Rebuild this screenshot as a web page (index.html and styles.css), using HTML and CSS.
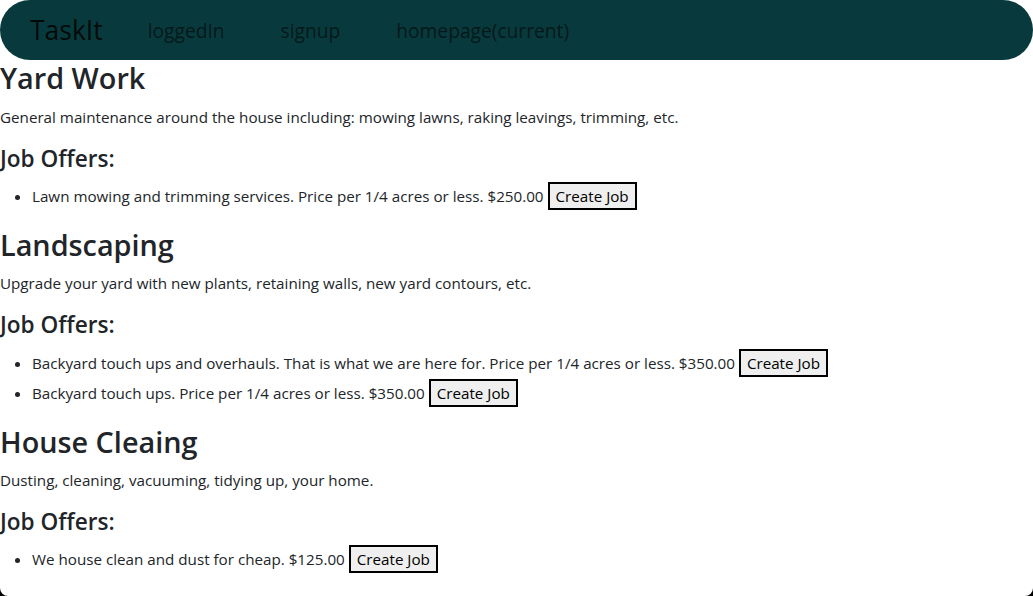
FILE: index.html
```html
<!DOCTYPE html>
<html lang="en">
<head>
<meta charset="utf-8">
<title>TaskIt</title>
<link rel="stylesheet" href="styles.css">
</head>
<body>
<nav class="navbar">
  <a class="brand">TaskIt</a>
  <a class="nav-link">loggedIn</a>
  <a class="nav-link">signup</a>
  <a class="nav-link">homepage(current)</a>
</nav>
<main>
  <section>
    <h2>Yard Work</h2>
    <p>General maintenance around the house including: mowing lawns, raking leavings, trimming, etc.</p>
    <h4>Job Offers:</h4>
    <ul>
      <li>Lawn mowing and trimming services. Price per 1/4 acres or less. $250.00 <button class="btn">Create Job</button></li>
    </ul>
  </section>
  <section>
    <h2>Landscaping</h2>
    <p>Upgrade your yard with new plants, retaining walls, new yard contours, etc.</p>
    <h4>Job Offers:</h4>
    <ul>
      <li>Backyard touch ups and overhauls. That is what we are here for. Price per 1/4 acres or less. $350.00 <button class="btn">Create Job</button></li>
      <li>Backyard touch ups. Price per 1/4 acres or less. $350.00 <button class="btn">Create Job</button></li>
    </ul>
  </section>
  <section>
    <h2>House Cleaing</h2>
    <p>Dusting, cleaning, vacuuming, tidying up, your home.</p>
    <h4>Job Offers:</h4>
    <ul>
      <li>We house clean and dust for cheap. $125.00 <button class="btn">Create Job</button></li>
    </ul>
  </section>
</main>
</body>
</html>
```
FILE: styles.css
```css
html {
  background: #000;
}
body {
  margin: 0;
  min-height: 100vh;
  background: #fff;
  border-radius: 0 0 8px 8px;
  font-family: "Segoe UI", "Open Sans", sans-serif;
  font-size: 15.2px;
  line-height: 24px;
  color: #212529;
}
.navbar {
  display: flex;
  align-items: center;
  height: 60px;
  box-sizing: border-box;
  padding: 0 30px;
  background: #083a3d;
  border-radius: 30px;
}
.brand {
  font-size: 26.5px;
  color: rgba(0, 0, 0, 0.85);
  margin-right: 45px;
  line-height: 1;
}
.nav-link {
  font-size: 19.2px;
  color: rgba(0, 0, 0, 0.6);
  margin-right: 56px;
  line-height: 1;
  padding-top: 2px;
}
h2, h4 {
  margin: 0 0 8px;
  font-weight: 600;
}
h2 {
  font-size: 28.8px;
  line-height: 36.6px;
}
h4 {
  font-size: 22.6px;
  line-height: 28.2px;
}
p {
  margin: 0 0 16px;
}
ul {
  margin: 0 0 16px;
  padding-left: 32px;
}
li {
  line-height: 30px;
}
.btn {
  font: inherit;
  line-height: 24px;
  color: #000;
  background: #efefef;
  border: 2px solid #000;
  padding: 0 6px;
  margin: 0;
}
```
